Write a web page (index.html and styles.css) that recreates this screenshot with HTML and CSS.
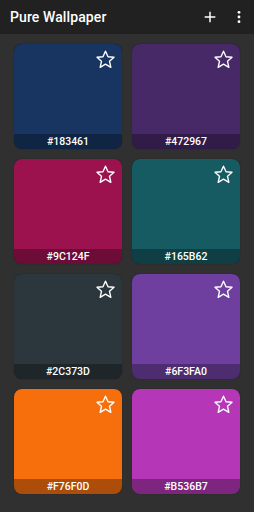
FILE: index.html
```html
<!DOCTYPE html>
<html lang="en">
<head>
  <meta charset="UTF-8">
  <meta name="viewport" content="width=device-width, initial-scale=1">
  <title>Pure Wallpaper</title>
  <link rel="stylesheet" href="styles.css">
</head>
<body>

  <header class="appbar">
    <h1 class="title">Pure Wallpaper</h1>
    <div class="actions">
      <svg class="icon" viewBox="0 0 24 24" width="16" height="16">
        <path d="M12 4v16M4 12h16" stroke="#fff" stroke-width="2.2" fill="none"/>
      </svg>
      <svg class="icon" viewBox="0 0 24 24" width="14" height="14">
        <circle cx="12" cy="4" r="2.4" fill="#fff"/>
        <circle cx="12" cy="12" r="2.4" fill="#fff"/>
        <circle cx="12" cy="20" r="2.4" fill="#fff"/>
      </svg>
    </div>
  </header>

  <main class="grid">
    <div class="card" style="background-color:#183461">
      <svg class="star" viewBox="0 0 24 24"><path d="M12 2.5l2.9 6.3 6.8.7-5.1 4.6 1.5 6.8L12 17.4l-6.1 3.5 1.5-6.8-5.1-4.6 6.8-.7z"/></svg>
      <div class="label">#183461</div>
    </div>
    <div class="card" style="background-color:#472967">
      <svg class="star" viewBox="0 0 24 24"><path d="M12 2.5l2.9 6.3 6.8.7-5.1 4.6 1.5 6.8L12 17.4l-6.1 3.5 1.5-6.8-5.1-4.6 6.8-.7z"/></svg>
      <div class="label">#472967</div>
    </div>
    <div class="card" style="background-color:#9C124F">
      <svg class="star" viewBox="0 0 24 24"><path d="M12 2.5l2.9 6.3 6.8.7-5.1 4.6 1.5 6.8L12 17.4l-6.1 3.5 1.5-6.8-5.1-4.6 6.8-.7z"/></svg>
      <div class="label">#9C124F</div>
    </div>
    <div class="card" style="background-color:#165B62">
      <svg class="star" viewBox="0 0 24 24"><path d="M12 2.5l2.9 6.3 6.8.7-5.1 4.6 1.5 6.8L12 17.4l-6.1 3.5 1.5-6.8-5.1-4.6 6.8-.7z"/></svg>
      <div class="label">#165B62</div>
    </div>
    <div class="card" style="background-color:#2C373D">
      <svg class="star" viewBox="0 0 24 24"><path d="M12 2.5l2.9 6.3 6.8.7-5.1 4.6 1.5 6.8L12 17.4l-6.1 3.5 1.5-6.8-5.1-4.6 6.8-.7z"/></svg>
      <div class="label">#2C373D</div>
    </div>
    <div class="card" style="background-color:#6F3FA0">
      <svg class="star" viewBox="0 0 24 24"><path d="M12 2.5l2.9 6.3 6.8.7-5.1 4.6 1.5 6.8L12 17.4l-6.1 3.5 1.5-6.8-5.1-4.6 6.8-.7z"/></svg>
      <div class="label">#6F3FA0</div>
    </div>
    <div class="card" style="background-color:#F76F0D">
      <svg class="star" viewBox="0 0 24 24"><path d="M12 2.5l2.9 6.3 6.8.7-5.1 4.6 1.5 6.8L12 17.4l-6.1 3.5 1.5-6.8-5.1-4.6 6.8-.7z"/></svg>
      <div class="label">#F76F0D</div>
    </div>
    <div class="card" style="background-color:#B536B7">
      <svg class="star" viewBox="0 0 24 24"><path d="M12 2.5l2.9 6.3 6.8.7-5.1 4.6 1.5 6.8L12 17.4l-6.1 3.5 1.5-6.8-5.1-4.6 6.8-.7z"/></svg>
      <div class="label">#B536B7</div>
    </div>
  </main>

</body>
</html>
```

FILE: styles.css
```css
body {
  margin: 0;
  background-color: #303030;
  font-family: Roboto, 'Noto Sans', sans-serif;
  color: #fff;
}

.appbar {
  height: 34px;
  background-color: #212121;
  display: flex;
  align-items: center;
  justify-content: space-between;
  padding: 0 8px 0 10px;
}

.title {
  margin: 0;
  font-size: 14px;
  font-weight: 500;
  letter-spacing: 0.1px;
}

.actions {
  display: flex;
  align-items: center;
  gap: 14px;
}

.icon {
  display: block;
}

.grid {
  display: grid;
  grid-template-columns: repeat(2, 108px);
  grid-auto-rows: 105px;
  column-gap: 10px;
  row-gap: 10px;
  padding: 10px 14px;
}

.card {
  position: relative;
  border-radius: 8px;
  overflow: hidden;
  display: flex;
  flex-direction: column;
  justify-content: flex-end;
  box-shadow: 0 0 1px rgba(0, 0, 0, 0.6);
}

.star {
  position: absolute;
  top: 5px;
  right: 6px;
  width: 21px;
  height: 21px;
  fill: none;
  stroke: #fff;
  stroke-width: 1.6;
  stroke-linejoin: round;
}

.label {
  height: 15px;
  line-height: 15px;
  background-color: rgba(0, 0, 0, 0.3);
  text-align: center;
  font-size: 10.5px;
  font-weight: 500;
}
```
